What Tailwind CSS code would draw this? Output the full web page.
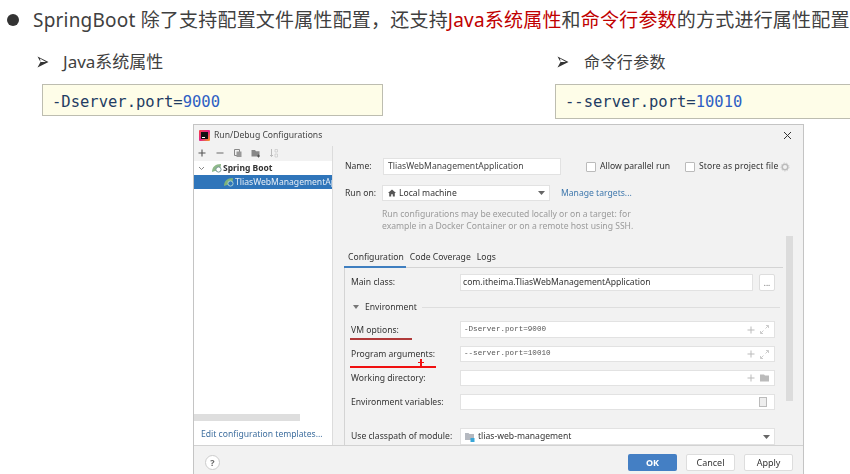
<!doctype html>
<html><head><meta charset="utf-8"><script src="https://cdn.jsdelivr.net/npm/@tailwindcss/browser@4"></script></head>
<body class="bg-white">
<div class="relative w-[850px] h-[474px] overflow-hidden bg-white font-['Noto_Sans','Noto_Sans_CJK_SC',sans-serif]">
  <div class="flex items-center h-[40px] text-[#404040] text-[19px] whitespace-nowrap">
    <div class="ml-[7px] w-[12px] h-[12px] rounded-full bg-[#333]"></div>
    <div class="ml-[14px] tracking-[0.2px]">SpringBoot 除了支持配置文件属性配置，还支持<span class="text-[#c00000]">Java系统属性</span>和<span class="text-[#c00000]">命令行参数</span>的方式进行属性配置</div>
  </div>
  <div class="flex h-[84px]">
    <div class="w-[555px] pl-[42px] shrink-0">
      <div class="flex items-center h-[44px] text-[17px] text-[#404040]">
        <svg class="ml-[-5px]" width="12" height="12" viewBox="0 0 12 12"><path d="M0.5 0.5 L11.5 6 L0.5 11.5 L3.5 6 Z M3 2.5 L9 6 L3.5 6 Z" fill="#333" fill-rule="evenodd"/></svg>
        <span class="ml-[14px]">Java系统属性</span>
      </div>
      <div class="flex items-center w-[341px] h-[32px] pt-[5px] bg-[#fefde8] border border-[#bdbdb0] pl-[9px] font-['DejaVu_Sans_Mono',monospace] text-[15.5px] text-[#1f3c63]">-Dserver.port=<span class="text-[#2e5fc4]">9000</span></div>
    </div>
    <div class="flex-1">
      <div class="flex items-center h-[44px] text-[16px] text-[#404040]">
        <svg class="ml-[2px]" width="12" height="12" viewBox="0 0 12 12"><path d="M0.5 0.5 L11.5 6 L0.5 11.5 L3.5 6 Z M3 2.5 L9 6 L3.5 6 Z" fill="#333" fill-rule="evenodd"/></svg>
        <span class="ml-[15px] tracking-[0.4px]">命令行参数</span>
      </div>
      <div class="flex items-center h-[35px] pt-[2px] bg-[#fefde8] border border-r-0 border-[#bdbdb0] pl-[9px] font-['DejaVu_Sans_Mono',monospace] text-[15.5px] text-[#1f3c63]">--server.port=<span class="text-[#2e5fc4]">10010</span></div>
    </div>
  </div>

  <!-- dialog -->
  <div class="relative ml-[193px] w-[611px] h-[350px] bg-[#f2f2f2] border border-b-0 border-[#c4c4c4] text-[8.6px] text-[#333] flex flex-col blur-[0.3px]">
    <div class="flex items-center h-[21px] shrink-0">
      <svg class="ml-[5px]" width="11" height="11" viewBox="0 0 11 11"><defs><linearGradient id="g" x1="0" y1="0" x2="1" y2="1"><stop offset="0" stop-color="#f9433e"/><stop offset="0.5" stop-color="#e0218a"/><stop offset="1" stop-color="#f9a21f"/></linearGradient></defs><rect width="11" height="11" rx="1" fill="url(#g)"/><rect x="2" y="2" width="7" height="7" fill="#111"/><rect x="3" y="7" width="3" height="1" fill="#fff"/></svg>
      <span class="ml-[4px] text-[#444]">Run/Debug Configurations</span>
      <svg class="ml-auto mr-[11px]" width="9" height="9" viewBox="0 0 9 9"><path d="M1 1 L8 8 M8 1 L1 8" stroke="#333" stroke-width="1"/></svg>
    </div>
    <div class="flex h-[300px] shrink-0 border-b border-[#d2d2d2]">
      <!-- left -->
      <div class="w-[139px] shrink-0 flex flex-col border-r border-[#dcdcdc]">
        <div class="flex items-center h-[15px] shrink-0 pl-[3px] pb-[2px] gap-[8px]">
          <svg width="10" height="10" viewBox="0 0 10 10"><path d="M5 1.5V8.5M1.5 5H8.5" stroke="#555" stroke-width="1.1"/></svg>
          <svg width="10" height="10" viewBox="0 0 10 10"><path d="M1.5 5H8.5" stroke="#777" stroke-width="1.1"/></svg>
          <svg width="10" height="10" viewBox="0 0 10 10"><path d="M1.5 1.5H6.5V7.5H1.5Z" fill="none" stroke="#888"/><path d="M3.5 3.5H8.5V9H3.5Z" fill="#999"/></svg>
          <svg width="10" height="10" viewBox="0 0 10 10"><path d="M0.5 2H4L5 3.2H8.5V8.5H0.5Z" fill="#888"/><path d="M7.5 6.5V9.5M6 8H9" stroke="#555"/></svg>
          <svg width="10" height="10" viewBox="0 0 10 10"><path d="M2.5 1V8.5M1 7L2.5 8.5L4 7" fill="none" stroke="#bbb"/><path d="M6 1.5H8.5V4H6ZM6 6H8.5V9H6Z" fill="none" stroke="#ccc" stroke-width="0.8"/></svg>
        </div>
        <div class="relative flex-1 bg-white min-h-0 overflow-hidden">
          <div class="flex items-center h-[14px] pl-[4px]">
            <svg width="7" height="7" viewBox="0 0 7 7"><path d="M1 2L3.5 4.5L6 2" fill="none" stroke="#888"/></svg>
            <svg class="ml-[6px]" width="11" height="10" viewBox="0 0 11 10"><path d="M1 9C1 4 4 1 10 1C10 6 7 8 4 8Z" fill="#8fb98a"/><circle cx="7.5" cy="6.5" r="2.6" fill="#fff" stroke="#7a9a95"/></svg>
            <span class="ml-[1px] font-bold text-[8.5px] text-[#333]">Spring Boot</span>
          </div>
          <div class="flex items-center h-[14px] pl-[29px] bg-[#2f75ba] text-[#e6eef7] whitespace-nowrap overflow-hidden">
            <svg class="shrink-0" width="11" height="10" viewBox="0 0 11 10"><path d="M1 9C1 4 4 1 10 1C10 6 7 8 4 8Z" fill="#7fb37a"/><circle cx="7.5" cy="6.5" r="2.6" fill="#2f75ba" stroke="#a8d0d0"/></svg>
            <span class="ml-[1px]">TliasWebManagementApplication</span>
          </div>
          <div class="absolute left-0 top-[253px] w-[106px] h-[7px] bg-[#dedede]"></div>
          <div class="absolute left-[7px] top-[267px] text-[#3f6f9f] whitespace-nowrap">Edit configuration templates...</div>
        </div>
      </div>
      <!-- right -->
      <div class="flex-1 pl-[11px] flex flex-col min-w-0">
        <div class="flex items-center mt-[12px] h-[17px] shrink-0">
          <span class="w-[39px] pl-[1px]">Name:</span>
          <div class="flex items-center w-[178px] h-full bg-white border border-[#e2e2e2] pl-[4px] text-[#444]">TliasWebManagementApplication</div>
          <div class="ml-[25px] w-[10px] h-[10px] bg-white border border-[#bbb] rounded-[1px]"></div>
          <span class="ml-[4px] w-[85px]">Allow parallel run</span>
          <div class="w-[10px] h-[10px] bg-white border border-[#bbb] rounded-[1px]"></div>
          <span class="ml-[4px] tracking-[0.1px]">Store as project file</span>
          <svg class="ml-[2px]" width="10" height="10" viewBox="0 0 10 10"><circle cx="5" cy="5" r="2.8" fill="none" stroke="#bbb" stroke-width="1.6"/><circle cx="5" cy="5" r="4" fill="none" stroke="#ccc" stroke-width="1" stroke-dasharray="1.4 1.4"/></svg>
        </div>
        <div class="flex items-center mt-[10px] h-[16px] shrink-0">
          <span class="w-[38px] pl-[1px]">Run on:</span>
          <div class="flex items-center w-[168px] h-full bg-white border border-[#e2e2e2] pl-[5px] pr-[4px]">
            <svg width="8" height="8" viewBox="0 0 8 8"><path d="M4 0.5L8 4H6.8V7.5H4.8V5.2H3.2V7.5H1.2V4H0Z" fill="#555"/></svg>
            <span class="ml-[3px]">Local machine</span>
            <svg class="ml-auto" width="7" height="4" viewBox="0 0 7 4"><path d="M0 0H7L3.5 4Z" fill="#666"/></svg>
          </div>
          <span class="ml-[11px] text-[#3f78ad]">Manage targets...</span>
        </div>
        <div class="mt-[7px] ml-[38px] text-[#9a9a9a] leading-[12px] shrink-0">Run configurations may be executed locally or on a target: for<br>example in a Docker Container or on a remote host using SSH.</div>
        <div class="flex mt-[16px] h-[19px] shrink-0 items-center pl-[4px] gap-[6px]">
          <span>Configuration</span><span>Code Coverage</span><span>Logs</span>
        </div>
        <div class="relative flex-1 w-[439px] border-t border-l border-[#d4d4d4] pl-[6px] flex flex-col min-h-0">
          <div class="absolute left-[-1px] top-[-2px] w-[62px] h-[2px] bg-[#3f7fc0]"></div>
          <div class="flex items-center mt-[6px] h-[17px] shrink-0">
            <span class="w-[109px]">Main class:</span>
            <div class="flex items-center w-[293px] h-full bg-white border border-[#e2e2e2] pl-[2px]">com.itheima.TliasWebManagementApplication</div>
            <div class="ml-[6px] w-[16px] h-full bg-white border border-[#ddd] rounded-[2px] flex items-center justify-center text-[8px] text-[#666]">...</div>
          </div>
          <div class="flex items-center mt-[8px] h-[16px] shrink-0 pl-[2px]">
            <svg width="6" height="4" viewBox="0 0 6 4"><path d="M0 0H6L3 4Z" fill="#777"/></svg>
            <span class="ml-[6px]">Environment</span>
            <div class="ml-[5px] w-[358px] h-px bg-[#dedede]"></div>
          </div>
          <div class="flex items-center mt-[6px] h-[17px] shrink-0">
            <span class="w-[109px] pt-[2px]">VM options:</span>
            <div class="flex items-center w-[315px] h-full bg-white border border-[#e2e2e2] pl-[3px] pr-[5px] font-['Liberation_Mono',monospace] text-[7.6px] text-[#555]"><span>-Dserver.port=9000</span>
              <svg class="ml-auto" width="8" height="8" viewBox="0 0 8 8"><path d="M4 0.5V7.5M0.5 4H7.5" stroke="#bbb"/></svg>
              <svg class="ml-[5px]" width="9" height="9" viewBox="0 0 9 9"><path d="M6 0.5H8.5V3M3 8.5H0.5V6M8.5 0.5L5.5 3.5M0.5 8.5L3.5 5.5" fill="none" stroke="#ccc"/></svg>
            </div>
          </div>
          <div class="flex items-center mt-[8px] h-[16px] shrink-0">
            <span class="w-[109px]">Program arguments:</span>
            <div class="flex items-center w-[315px] h-full bg-white border border-[#e2e2e2] pl-[3px] pr-[5px] font-['Liberation_Mono',monospace] text-[7.6px] text-[#555]"><span>--server.port=10010</span>
              <svg class="ml-auto" width="8" height="8" viewBox="0 0 8 8"><path d="M4 0.5V7.5M0.5 4H7.5" stroke="#bbb"/></svg>
              <svg class="ml-[5px]" width="9" height="9" viewBox="0 0 9 9"><path d="M6 0.5H8.5V3M3 8.5H0.5V6M8.5 0.5L5.5 3.5M0.5 8.5L3.5 5.5" fill="none" stroke="#ccc"/></svg>
            </div>
          </div>
          <div class="flex items-center mt-[8px] h-[16px] shrink-0">
            <span class="w-[109px]">Working directory:</span>
            <div class="flex items-center w-[315px] h-full bg-white border border-[#e2e2e2] pr-[4px]">
              <svg class="ml-auto" width="8" height="8" viewBox="0 0 8 8"><path d="M4 0.5V7.5M0.5 4H7.5" stroke="#bbb"/></svg>
              <svg class="ml-[5px]" width="10" height="8" viewBox="0 0 10 8"><path d="M0 0.5H4L5 1.5H9V7.5H0Z" fill="#bbb"/></svg>
            </div>
          </div>
          <div class="flex items-center mt-[8px] h-[16px] shrink-0">
            <span class="w-[109px]">Environment variables:</span>
            <div class="flex items-center w-[315px] h-full bg-white border border-[#e2e2e2] pr-[7px]">
              <svg class="ml-auto" width="8" height="10" viewBox="0 0 8 10"><rect x="0.5" y="0.5" width="7" height="9" fill="#eee" stroke="#bbb"/></svg>
            </div>
          </div>
          <div class="flex items-center mt-[18px] h-[17px] shrink-0">
            <span class="w-[109px]">Use classpath of module:</span>
            <div class="flex items-center w-[315px] h-full bg-white border border-[#e2e2e2] pl-[4px] pr-[4px]">
              <svg width="10" height="10" viewBox="0 0 10 10"><path d="M0 1H3.5L4.5 2H9V8H0Z" fill="#b5b9c0"/><rect x="5.5" y="6" width="4" height="4" fill="#3aa7d8"/></svg>
              <span class="ml-[3px]">tlias-web-management</span>
              <svg class="ml-auto" width="7" height="4" viewBox="0 0 7 4"><path d="M0 0H7L3.5 4Z" fill="#666"/></svg>
            </div>
          </div>
        </div>
      </div>
    </div>
    <div class="flex items-center flex-1 pl-[11px] pr-[10px] pt-[5px] text-[9px]">
      <div class="w-[15px] h-[15px] rounded-full bg-white border border-[#ccc] flex items-center justify-center font-bold text-[#666]">?</div>
      <div class="ml-auto flex gap-[9px]">
        <div class="w-[49px] h-[17px] rounded-[2px] bg-[#447fc4] text-white font-bold flex items-center justify-center">OK</div>
        <div class="w-[49px] h-[17px] rounded-[2px] bg-white border border-[#ddd] flex items-center justify-center">Cancel</div>
        <div class="w-[49px] h-[17px] rounded-[2px] bg-white border border-[#ddd] flex items-center justify-center">Apply</div>
      </div>
    </div>
    <!-- scrollbar over the form -->
    <div class="absolute left-[592px] top-[111px] w-[7px] h-[165px] bg-[#dcdcdc]"></div>
  </div>
  <!-- hand-drawn annotation -->
  <div class="absolute left-[350px] top-[338px] w-[62px] h-[2px] bg-[#b03a3a]"></div>
  <div class="absolute left-[350px] top-[366px] w-[86px] h-[2px] bg-[#f01010]"></div>
  <div class="absolute left-[418px] top-[362px] w-[6px] h-[1px] bg-[#f01010]"></div>
  <div class="absolute left-[420px] top-[359px] w-[2px] h-[7px] bg-[#f01010]"></div>
</div>
</body></html>
